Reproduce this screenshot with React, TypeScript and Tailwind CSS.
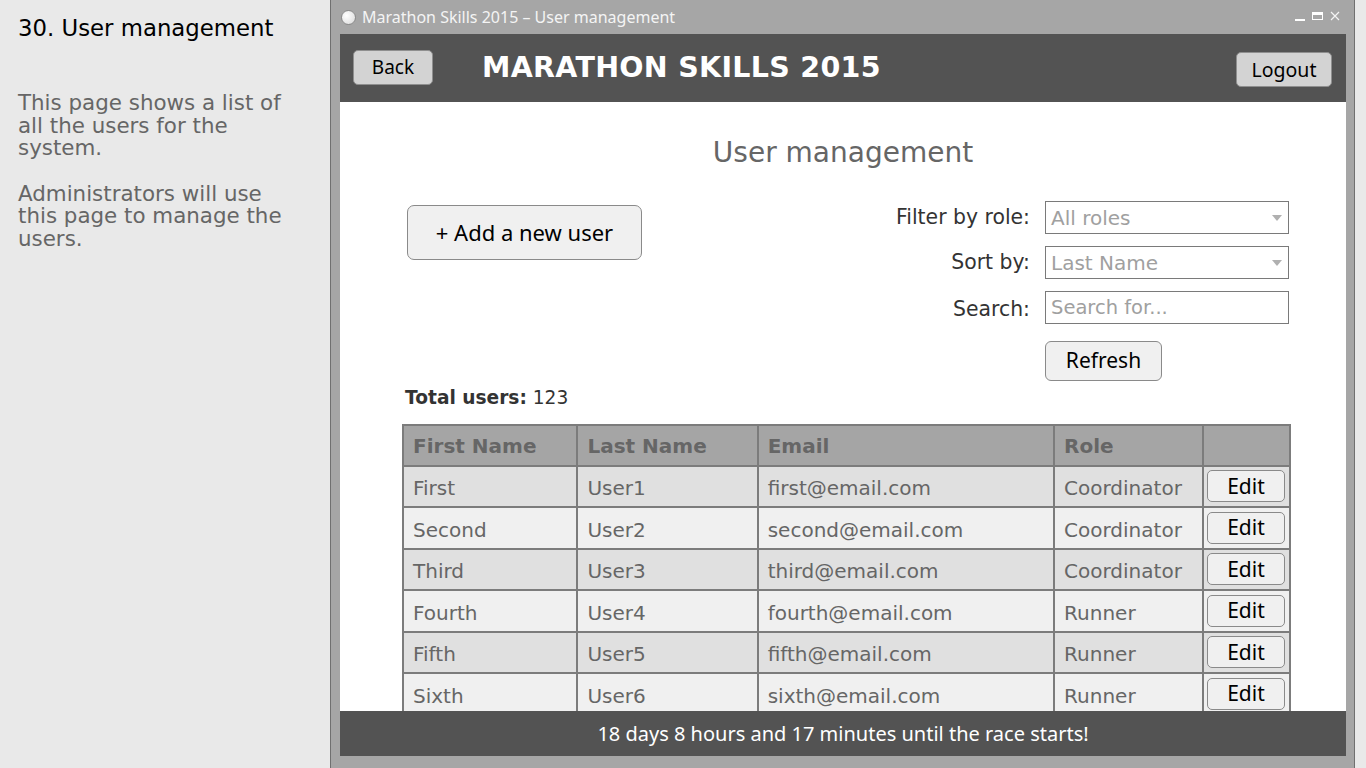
import React from "react";

type UserRow = { first: string; last: string; email: string; role: string };

const users: UserRow[] = [
  { first: "First", last: "User1", email: "first@email.com", role: "Coordinator" },
  { first: "Second", last: "User2", email: "second@email.com", role: "Coordinator" },
  { first: "Third", last: "User3", email: "third@email.com", role: "Coordinator" },
  { first: "Fourth", last: "User4", email: "fourth@email.com", role: "Runner" },
  { first: "Fifth", last: "User5", email: "fifth@email.com", role: "Runner" },
  { first: "Sixth", last: "User6", email: "sixth@email.com", role: "Runner" },
];

const verdana = "font-['DejaVu_Sans',Verdana,sans-serif]";
const segoe = "font-['Noto_Sans','Open_Sans',sans-serif]";

// small caret used inside the fake combo boxes
const Caret = () => (
  <svg width="10" height="6" viewBox="0 0 10 6" className="shrink-0">
    <path d="M0 0 L10 0 L5 6 Z" fill="#b0b0b0" />
  </svg>
);

const Select = ({ value }: { value: string }) => (
  <div className="flex h-[33px] w-[244px] items-center justify-between border border-[#7a7a7a] bg-white pl-[5px] pr-[6px]">
    <span className={`${verdana} text-[20px] text-[#a0a0a0]`}>{value}</span>
    <Caret />
  </div>
);

export default function App() {
  return (
    <div className="flex h-[768px] w-[1366px] overflow-hidden bg-[#e9e9e9]">
      {/* notes column */}
      <aside className={`${verdana} w-[330px] shrink-0 pl-[18px] pt-[14px]`}>
        <h2 className="text-[22.8px] leading-[28px] text-black">30. User management</h2>
        <div className="mt-[50px] w-[276px] text-[21.4px] leading-[22.5px] text-[#666]">
          <p>This page shows a list of all the users for the system.</p>
          <p className="mt-[23px]">Administrators will use this page to manage the users.</p>
        </div>
      </aside>

      {/* window */}
      <div className="flex w-[1025px] shrink-0 flex-col border-x border-[#707070] bg-[#a6a6a6]">
        {/* title bar */}
        <div className="flex h-[34px] items-center pl-[10px] pr-[14px]">
          <div className="h-[15px] w-[15px] rounded-full border border-[#8a8a8a] bg-[radial-gradient(circle_at_35%_35%,#ffffff,#d8d8d8)]" />
          <span className={`${segoe} ml-[6px] text-[16px] text-[#f4f4f4]`}>
            Marathon Skills 2015 – User management
          </span>
          <div className="ml-auto flex items-center gap-[7px] pb-[2px]">
            <div className="mt-[8px] h-[2px] w-[10px] bg-white" />
            <div className="h-[8px] w-[11px] border border-t-[3px] border-white" />
            <svg width="10" height="10" viewBox="0 0 10 10">
              <path d="M1 1 L9 9 M9 1 L1 9" stroke="#f4f4f4" strokeWidth="1.2" />
            </svg>
          </div>
        </div>

        {/* client area */}
        <div className="ml-[9px] mr-[8px] flex h-[722px] flex-col">
          {/* header */}
          <header className="flex h-[68px] items-center bg-[#535353] pl-[13px] pr-[14px]">
            <button className={`${segoe} mb-[1px] h-[35px] w-[80px] rounded-[5px] border border-[#8f8f8f] bg-[#d3d3d3] text-[19px] text-black`}>
              Back
            </button>
            <h1 className={`${verdana} ml-[49px] text-[28.5px] font-bold tracking-[0.3px] text-white`}>
              MARATHON SKILLS 2015
            </h1>
            <button className={`${segoe} ml-auto mt-[3px] h-[35px] w-[96px] rounded-[5px] border border-[#8f8f8f] bg-[#d3d3d3] text-[19.5px] text-black`}>
              Logout
            </button>
          </header>

          {/* body */}
          <main className="h-[609px] overflow-hidden bg-white">
            <h2 className={`${verdana} mt-[34px] text-center text-[28px] leading-[34px] text-[#666]`}>
              User management
            </h2>

            <div className="mt-[31px] flex justify-between pl-[67px] pr-[57px]">
              <button className={`${segoe} mt-[4px] h-[55px] w-[235px] rounded-[7px] border border-[#8a8a8a] bg-[#f0f0f0] text-[22px] text-black`}>
                + Add a new user
              </button>

              <div className={`${verdana} grid grid-cols-[auto_244px] items-center gap-x-[15px] gap-y-[12px] text-[20.4px] text-[#333]`}>
                <span className="text-right">Filter by role:</span>
                <Select value="All roles" />
                <span className="text-right">Sort by:</span>
                <Select value="Last Name" />
                <span className="pt-[3px] text-right">Search:</span>
                <div className="flex h-[33px] items-center border border-[#7a7a7a] bg-white pl-[5px]">
                  <span className="text-[19.5px] text-[#a0a0a0]">Search for...</span>
                </div>
                <span />
                <button className={`${segoe} mt-[4px] h-[40px] w-[117px] rounded-[6px] border border-[#8a8a8a] bg-[#f0f0f0] text-[21px] text-black`}>
                  Refresh
                </button>
              </div>
            </div>

            <p className={`${verdana} ml-[65px] mt-[6px] text-[18.6px] leading-[22px] text-[#333]`}>
              <span className="font-bold">Total users:</span> 123
            </p>

            <table className={`${verdana} ml-[62px] mt-[15px] w-[889px] border-collapse text-[20px] text-[#666]`}>
              <colgroup>
                <col className="w-[175px]" />
                <col className="w-[181px]" />
                <col className="w-[297px]" />
                <col className="w-[149px]" />
                <col className="w-[87px]" />
              </colgroup>
              <thead>
                <tr className="h-[41px] bg-[#a5a5a5]">
                  {["First Name", "Last Name", "Email", "Role", ""].map((h) => (
                    <th key={h} className="border-2 border-[#7c7c7c] px-[9px] pt-[2px] text-left font-bold">
                      {h}
                    </th>
                  ))}
                </tr>
              </thead>
              <tbody>
                {users.map((u, i) => (
                  <tr key={u.email} className={`h-[41.5px] ${i % 2 === 0 ? "bg-[#e0e0e0]" : "bg-[#f0f0f0]"}`}>
                    <td className="border-2 border-[#7c7c7c] px-[9px] pt-[4px]">{u.first}</td>
                    <td className="border-2 border-[#7c7c7c] px-[9px] pt-[4px]">{u.last}</td>
                    <td className="border-2 border-[#7c7c7c] px-[9px] pt-[4px]">{u.email}</td>
                    <td className="border-2 border-[#7c7c7c] px-[9px] pt-[4px]">{u.role}</td>
                    <td className="border-2 border-[#7c7c7c] px-[3px]">
                      <button className={`${segoe} h-[32px] w-[78px] rounded-[5px] border border-[#8a8a8a] bg-[#f0f0f0] text-[21px] leading-none text-black`}>
                        Edit
                      </button>
                    </td>
                  </tr>
                ))}
              </tbody>
            </table>
          </main>

          {/* countdown */}
          <footer className={`${segoe} flex h-[45px] items-center justify-center bg-[#535353] text-[20px] text-white`}>
            18 days 8 hours and 17 minutes until the race starts!
          </footer>
        </div>
      </div>
    </div>
  );
}
